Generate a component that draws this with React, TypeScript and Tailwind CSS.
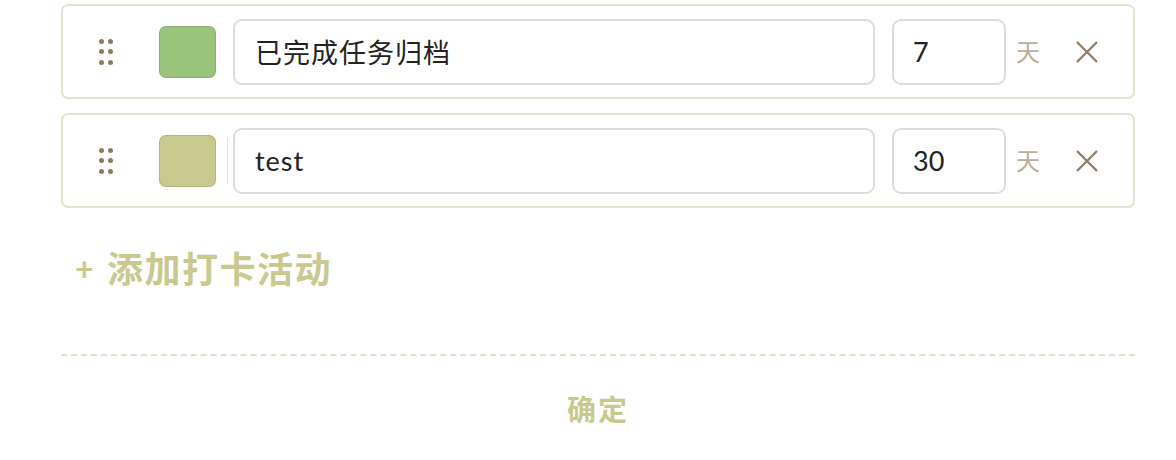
import { useState } from "react";

interface Activity {
  id: number;
  name: string;
  color: string;
  days: string;
}

const FONT = { fontFamily: '"Lato", "Noto Sans CJK SC", sans-serif' };

function DragHandle() {
  return (
    <div className="grid grid-cols-2 gap-x-[4px] gap-y-[5.5px]">
      {[0, 1, 2, 3, 4, 5].map((i) => (
        <span key={i} className="block h-[5px] w-[5px] rounded-full bg-[#8c7b62]" />
      ))}
    </div>
  );
}

function ActivityRow({ item, divider }: { item: Activity; divider?: boolean }) {
  return (
    <div className="flex h-[95px] items-center rounded-[7px] border-2 border-[#e7e1cf] bg-white pl-[36px] pr-[34px]">
      <DragHandle />
      <div
        className="ml-[46px] h-[52px] w-[57px] shrink-0 rounded-[7px] border border-black/10"
        style={{ backgroundColor: item.color }}
      />
      <div className={`ml-[11px] mr-[5px] h-[46px] w-px ${divider ? "bg-[#e2e2e2]" : "bg-transparent"}`} />
      <input
        defaultValue={item.name}
        className="h-[66px] min-w-0 flex-1 rounded-[9px] border-2 border-[#dcdcdc] bg-white pl-[20px] text-[27px] tracking-[1px] text-[#222] outline-none"
        style={FONT}
      />
      <input
        defaultValue={item.days}
        className="ml-[17px] h-[66px] w-[114px] rounded-[9px] border-2 border-[#dcdcdc] bg-white pl-[19px] text-[27px] text-[#222] outline-none"
        style={FONT}
      />
      <span className="ml-[10px] text-[24px] text-[#b9ae97]" style={FONT}>
        天
      </span>
      <button className="ml-[35px] flex h-[24px] w-[24px] items-center justify-center text-[#8c7b62]">
        <svg width="22" height="22" viewBox="0 0 22 22" fill="none" stroke="currentColor" strokeWidth="2.2">
          <path d="M1 1 L21 21 M21 1 L1 21" />
        </svg>
      </button>
    </div>
  );
}

export default function App() {
  const [items] = useState<Activity[]>([
    { id: 1, name: "已完成任务归档", color: "#9ac47c", days: "7" },
    { id: 2, name: "test", color: "#c8c88f", days: "30" },
  ]);

  return (
    <div className="min-h-[460px] w-[1176px] bg-white pt-[4px]" style={FONT}>
      <div className="ml-[61px] w-[1074px]">
        <div className="flex flex-col gap-[14px]">
          {items.map((item, i) => (
            <ActivityRow key={item.id} item={item} divider={i === 1} />
          ))}
        </div>

        <button className="mt-[43px] ml-[14px] flex items-center text-[36px] font-bold leading-none tracking-[1.5px] text-[#c9c98f]">
          <span className="mr-[12px] text-[32px]">+</span>
          添加打卡活动
        </button>

        <div className="mt-[67px] border-t-2 border-dashed border-[#e4dfcd]" />

        <div className="flex justify-center pt-[39px]">
          <button className="text-[29px] font-bold leading-none tracking-[2px] text-[#c9c98f]">确定</button>
        </div>
      </div>
    </div>
  );
}
